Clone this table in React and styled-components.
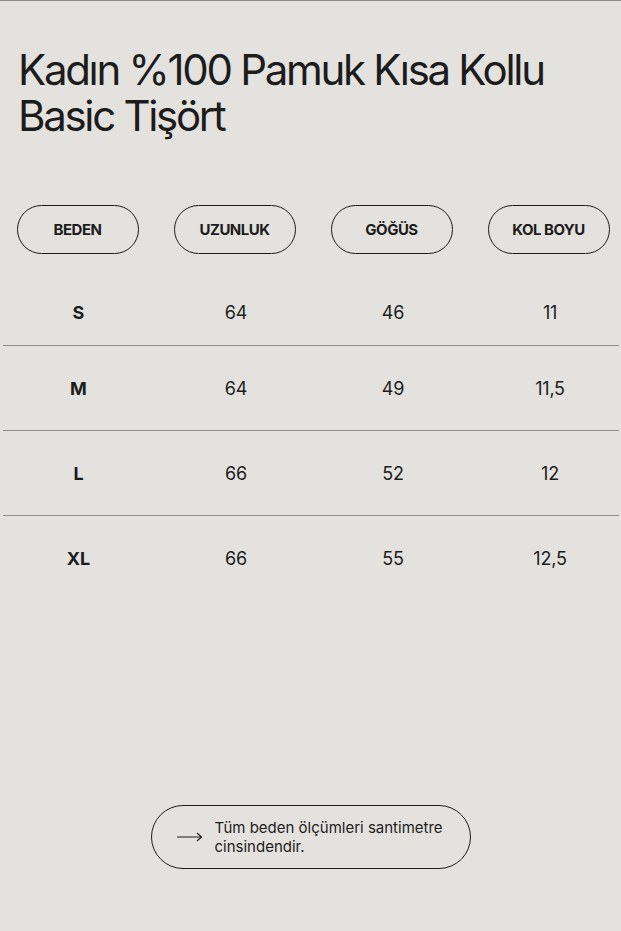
import styled, { createGlobalStyle } from "styled-components";

const GlobalStyle = createGlobalStyle`
  html, body {
    margin: 0;
    padding: 0;
    background: #e4e2de;
  }
  body {
    font-family: Inter, "Liberation Sans", sans-serif;
    color: #1c1c1c;
  }
`;

const sizes = [
  { size: "S", length: "64", chest: "46", sleeve: "11" },
  { size: "M", length: "64", chest: "49", sleeve: "11,5" },
  { size: "L", length: "66", chest: "52", sleeve: "12" },
  { size: "XL", length: "66", chest: "55", sleeve: "12,5" },
];

const headers = ["BEDEN", "UZUNLUK", "GÖĞÜS", "KOL BOYU"];

export default function App() {
  return (
    <Page>
      <GlobalStyle />
      <Title>
        Kadın %100 Pamuk Kısa Kollu
        <br />
        Basic Tişört
      </Title>

      <HeaderRow>
        {headers.map((h) => (
          <Cell key={h}>
            <Pill>{h}</Pill>
          </Cell>
        ))}
      </HeaderRow>

      <Table>
        {sizes.map((row, idx) => (
          <Row
            key={row.size}
            $first={idx === 0}
            $last={idx === sizes.length - 1}
          >
            <Cell>
              <SizeText>{row.size}</SizeText>
            </Cell>
            <Cell>
              <Value>{row.length}</Value>
            </Cell>
            <Cell>
              <Value>{row.chest}</Value>
            </Cell>
            <Cell>
              <Value>{row.sleeve}</Value>
            </Cell>
          </Row>
        ))}
      </Table>

      <Footer>
        <Note>
          <svg width="26" height="10" viewBox="0 0 26 10" fill="none">
            <path
              d="M0 5h24.5M20 1l4.5 4-4.5 4"
              stroke="#1c1c1c"
              strokeWidth="1.1"
            />
          </svg>
          <NoteText>
            Tüm beden ölçümleri santimetre
            <br />
            cinsindendir.
          </NoteText>
        </Note>
      </Footer>
    </Page>
  );
}

const Page = styled.div`
  width: 621px;
  height: 931px;
  border-top: 1px solid #8a8986;
  box-sizing: border-box;
  display: flex;
  flex-direction: column;
`;

const Title = styled.h1`
  margin: 46px 0 0 18px;
  font-size: 42px;
  font-weight: 400;
  line-height: 46px;
  letter-spacing: -2.3px;
  color: #1c1c1c;
`;

const HeaderRow = styled.div`
  display: grid;
  grid-template-columns: repeat(4, 157px);
  margin-top: 66px;
  padding-left: 0;
`;

const Cell = styled.div`
  display: flex;
  align-items: center;
  justify-content: center;
`;

const Pill = styled.div`
  width: 122px;
  height: 49px;
  margin-left: -2px;
  box-sizing: border-box;
  border: 1.5px solid #1c1c1c;
  border-radius: 25px;
  display: flex;
  align-items: center;
  justify-content: center;
  font-size: 15px;
  font-weight: 700;
  letter-spacing: -0.5px;
`;

const Table = styled.div`
  margin-top: 26px;
  display: flex;
  flex-direction: column;
`;

const Row = styled.div`
  display: grid;
  grid-template-columns: repeat(4, 157px);
  height: ${(p) => (p.$first ? "66px" : "85px")};
  margin: 0 2px 0 3px;
  box-sizing: border-box;
  border-bottom: ${(p) => (p.$last ? "none" : "1.5px solid #8f8e8b")};
`;

const SizeText = styled.span`
  font-size: 18px;
  font-weight: 700;
  margin-left: -6px;
`;

const Value = styled.span`
  font-size: 18px;
  font-weight: 400;
  margin-left: -5px;
  letter-spacing: -0.2px;
`;

const Footer = styled.div`
  margin-top: auto;
  margin-bottom: 62px;
  display: flex;
  justify-content: center;
`;

const Note = styled.div`
  width: 320px;
  height: 64px;
  box-sizing: border-box;
  border: 1.5px solid #1c1c1c;
  border-radius: 32px;
  display: flex;
  align-items: center;
  gap: 12px;
  padding-left: 25px;
`;

const NoteText = styled.p`
  margin: 0;
  font-size: 15px;
  line-height: 19px;
  color: #1c1c1c;
`;
